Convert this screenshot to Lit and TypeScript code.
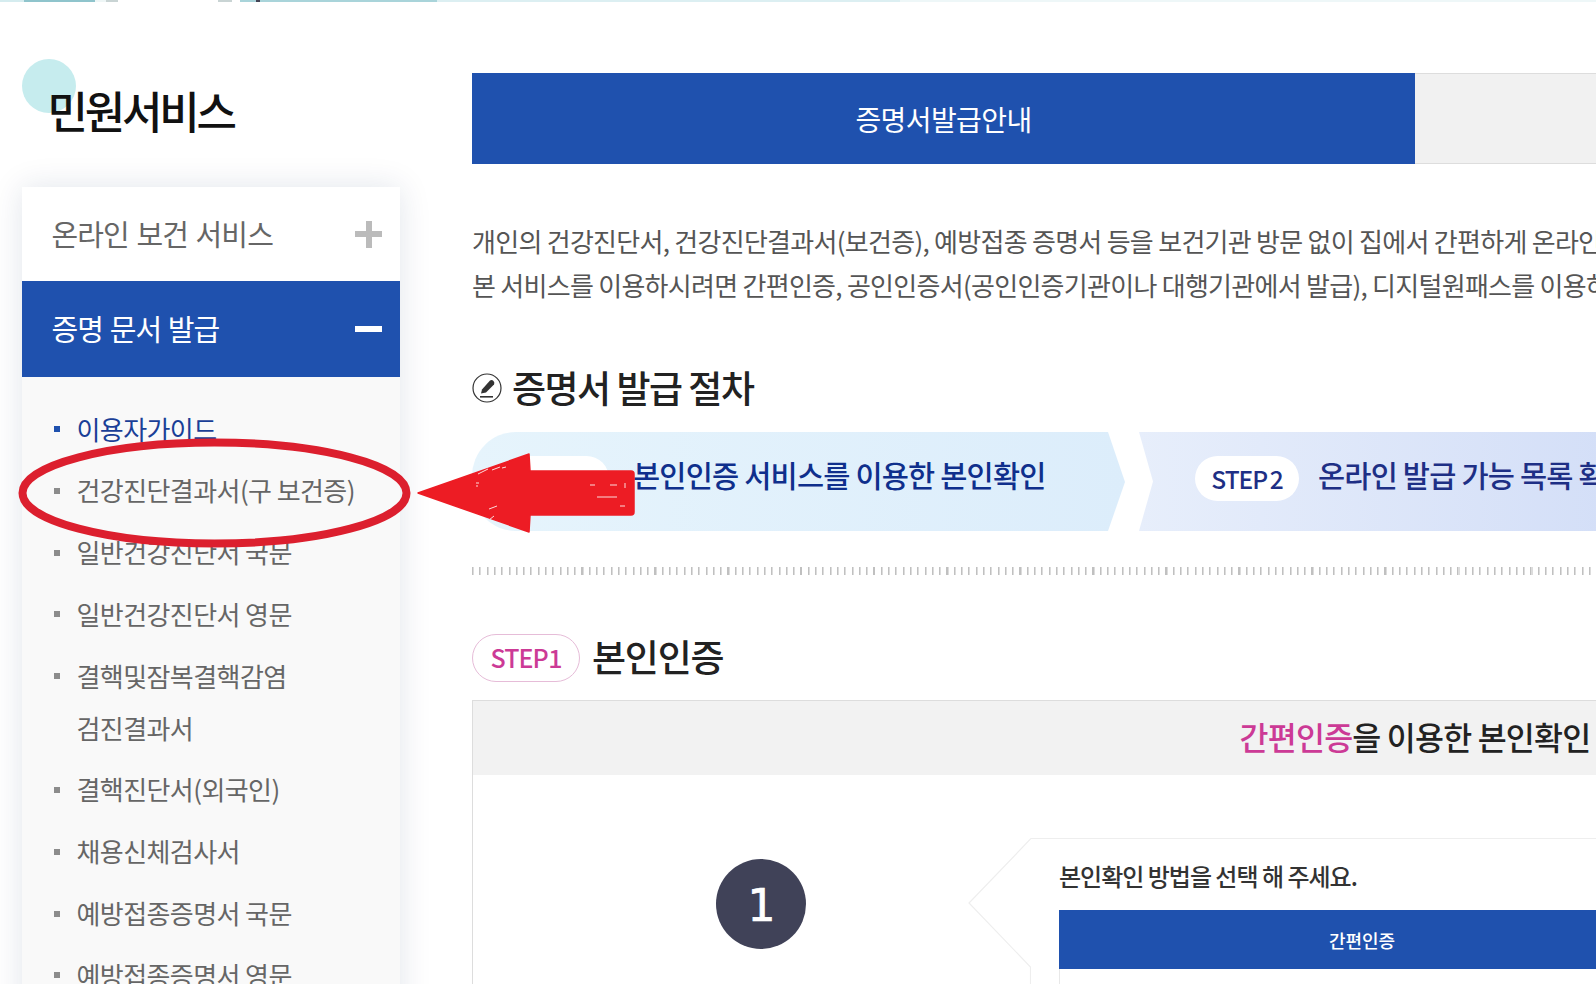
import { LitElement, html, css, svg } from "lit";
import { customElement } from "lit/decorators.js";

const SUB: { label: string[]; on?: boolean }[] = [
  { label: ["이용자가이드"], on: true },
  { label: ["건강진단결과서(구 보건증)"] },
  { label: ["일반건강진단서 국문"] },
  { label: ["일반건강진단서 영문"] },
  { label: ["결핵및잠복결핵감염", "검진결과서"] },
  { label: ["결핵진단서(외국인)"] },
  { label: ["채용신체검사서"] },
  { label: ["예방접종증명서 국문"] },
  { label: ["예방접종증명서 영문"] },
];

@customElement("app-root")
export class AppRoot extends LitElement {
  static styles = css`
    :host { display: block; width: 1596px; height: 984px; overflow: hidden; position: relative; background: #fff;
      font-family: "Noto Sans CJK KR", "Noto Sans", sans-serif; color: #555; }
    .strip { height: 2px; background: linear-gradient(90deg,
      #d5ecef 0 24px, #8fc4cc 24px 95px, #eef6f6 95px 106px, #c9d4d4 106px 118px, #fff 118px 218px, #c9d4d4 218px 232px,
      #fff 232px 240px, #a9d4da 240px 256px, #445 256px 260px, #a9d4da 260px 437px, #dceff2 437px 900px, #eef7f8 900px); }
    .row { display: flex; align-items: flex-start; }
    .side { flex: 0 0 378px; margin-left: 22px; }
    .title { position: relative; height: 185px; }
    .title::before { content: ""; position: absolute; left: 0; top: 57px; width: 54px; height: 54px; border-radius: 50%; background: #c6ecee; }
    .title h1 { position: relative; margin: 0; padding: 82px 0 0 25.5px; font-size: 44px; line-height: 52px; font-weight: 500;
      letter-spacing: -3.2px; color: #111; }
    .card { box-shadow: 0 0 30px rgba(20, 40, 90, 0.12); background: #f9f9f9; padding-bottom: 60px; }
    .head { display: flex; align-items: center; justify-content: space-between; height: 94px; padding: 0 18px 0 29.5px;
      background: #fff; font-size: 29px; letter-spacing: -0.9px; word-spacing: 2px; color: #666; }
    .head.open { height: 96px; background: #1f51ae; color: #fff; word-spacing: 1px; }
    .head span:first-child { padding-bottom: 2px; }
    .sign { position: relative; width: 27px; height: 27px; color: #bbb; }
    .sign::before { content: ""; position: absolute; left: 0; right: 0; top: 10.5px; height: 6px; background: currentColor; }
    .sign.plus::after { content: ""; position: absolute; top: 0; bottom: 0; left: 10.5px; width: 6px; background: currentColor; }
    .head.open .sign { color: #fff; }
    ul { list-style: none; margin: 0; padding: 25.5px 30px 0 54.5px; font-size: 26px; letter-spacing: -0.58px; line-height: 52px; color: #666; }
    li { position: relative; margin-bottom: 9.8px; }
    li::before { content: ""; position: absolute; left: -22.5px; top: 23.5px; width: 6px; height: 6px; background: #8c8c8c; }
    li.on { color: #1a3f97; }
    li.on::before { background: #1f51ae; }
    .main { flex: 0 0 1886px; margin-left: 72px; padding-top: 71px; }
    .tabs { display: flex; height: 91px; font-size: 28px; letter-spacing: -0.6px; }
    .tab { flex: 1; display: flex; align-items: center; justify-content: center; box-sizing: border-box; background: #f1f1f1;
      border-top: 1px solid #ddd; border-bottom: 1px solid #ddd; }
    .tab.on { background: #1f51ae; color: #fff; border: 0; }
    .intro { margin: 55px 0 0; font-size: 26px; letter-spacing: -0.72px; line-height: 43.5px; white-space: nowrap; color: #555; }
    .h2 { display: flex; align-items: center; gap: 10px; height: 44px; margin: 60px 0 0; font-size: 37px; letter-spacing: -1.5px; line-height: 44px; font-weight: 500; color: #222; }
    .h2 svg { display: block; }
    .h2 span { padding-bottom: 2px; }
    .steps { display: flex; margin-top: 22px; height: 99px; font-size: 29.5px; letter-spacing: -0.8px; font-weight: 500; }
    .step { display: flex; align-items: flex-start; flex-shrink: 0; white-space: nowrap; }
    .step.a { width: 653px; padding-left: 33px; box-sizing: border-box; color: #0f2f8c;
      background: linear-gradient(90deg, #e6f4fc, #dcedfb);
      clip-path: path("M44 0 H636 L653 50 L636 99 H44 A44 44 0 0 1 0 55 V44 A44 44 0 0 1 44 0 Z"); }
    .step.b { width: 800px; margin-left: 14px; padding-left: 56px; box-sizing: border-box; color: #1e2f85;
      background: linear-gradient(90deg, #e7eefb, #c6d4f5);
      clip-path: polygon(0 0, 100% 0, 100% 100%, 0 100%, 14px 50%); }
    .step-text { margin-top: 19px; line-height: 46px; }
    .pill { flex: none; width: 104px; height: 45px; margin-top: 24px; box-sizing: border-box; padding-bottom: 1px; border-radius: 23px; background: #fff;
      display: flex; align-items: center; justify-content: center; font-size: 24.5px; letter-spacing: -1px; word-spacing: -2px; }
    .a .pill { margin-right: 24px; }
    .b .pill { margin-right: 19px; }
    .dash { margin-top: 36px; height: 8px; background: repeating-linear-gradient(90deg, #c0c0c0 0 1px, #dcdcdc 1px 2px, transparent 2px 7.3px); }
    .h3 { display: flex; align-items: center; gap: 12px; margin-top: 59px; height: 48px; font-size: 37px; letter-spacing: -1.2px; font-weight: 500; color: #222; }
    .h3 > span:last-child { padding-bottom: 4px; }
    .tag { width: 108px; height: 48px; box-sizing: border-box; padding-bottom: 3px; border: 1px solid #e6bcd8; border-radius: 24px; display: flex; align-items: center; justify-content: center;
      font-size: 25px; font-weight: 500; color: #cc3a96; letter-spacing: -1px; word-spacing: -4px; }
    .box { margin-top: 18px; border: 1px solid #ddd; border-bottom: 0; }
    .box-head { height: 74px; box-sizing: border-box; padding-bottom: 4px; background: #f2f2f2; display: flex; align-items: center; justify-content: center;
      font-size: 31.5px; letter-spacing: -0.8px; font-weight: 500; color: #222; }
    .box-head b { font-weight: 500; color: #cc3a96; }
    .box-body { display: flex; align-items: flex-start; padding-top: 63px; }
    .num { flex: none; width: 90px; height: 90px; margin: 21px 162px 0 243px; border-radius: 50%; background: #404258; color: #fff;
      display: flex; align-items: center; justify-content: center; padding: 3px 0 0 1px; box-sizing: border-box; font-size: 44px; font-family: "DejaVu Sans", sans-serif; -webkit-text-stroke: 0.7px #fff; }
    .tip { flex: none; display: block; }
    .bubble { flex: 1; border-top: 1px solid #eee; padding: 20px 0 0 28px; }
    .bubble p { margin: 0; font-size: 24px; line-height: 34px; font-weight: 500; color: #333; letter-spacing: -1px; }
    .bar { margin-top: 17px; width: 606px; height: 59px; background: #1f51ae; color: #fff; display: flex; align-items: center; justify-content: center; font-size: 18px; font-weight: 500; }
    .table { width: 606px; height: 40px; box-sizing: border-box; border-left: 1px solid #e8e8e8; }
    .mark { position: absolute; left: 0; top: 0; pointer-events: none; }
  `;

  private pencil() {
    return html`<svg width="30" height="30" viewBox="0 0 30 30">
      <circle cx="15" cy="15" r="14" fill="#fff" stroke="#333" stroke-width="1.2"></circle>
      <path d="M10 16.500 L18 7.500 Q20 6.500 21.500 8 Q23 9.500 22 11.500 L14 19.500 L9 20.500 Z" fill="#333"></path>
      <rect x="8" y="23" width="13" height="1.600" fill="#333"></rect>
    </svg>`;
  }

  private annotation() {
    const specks = [
      "M476 483h3", "M476 486h2", "M478 474l10-5", "M492 470l8-3", "M502 468l4-1", "M489 509l8-3", "M494 516l-5 4",
      "M590 485h5", "M610 485h7", "M597 497h20", "M620 506h5", "M625 483v5",
    ];
    return svg`<svg class="mark" width="1596" height="984" viewBox="0 0 1596 984">
      <ellipse cx="214.500" cy="493" rx="192" ry="50.500" fill="none" stroke="#dc1f2e" stroke-width="8"></ellipse>
      <path d="M418 493 L529 454 L530 471 H631 Q634 471 634 474 V512 Q634 515 631 515 H530 L529 532 Z" fill="#ed1c24" stroke="#ed1c24" stroke-width="1.500" stroke-linejoin="round"></path>
      ${specks.map((d) => svg`<path d=${d} stroke="#fbdcdc" stroke-width="1" fill="none"></path>`)}
    </svg>`;
  }

  render() {
    return html`
      <div class="strip"></div>
      <div class="row">
        <aside class="side">
          <div class="title"><h1>민원서비스</h1></div>
          <div class="card">
            <div class="head"><span>온라인 보건 서비스</span><span class="sign plus"></span></div>
            <div class="head open"><span>증명 문서 발급</span><span class="sign"></span></div>
            <ul>${SUB.map((s) => html`<li class=${s.on ? "on" : ""}>${s.label.map((t, i) => html`${i ? html`<br />` : ""}${t}`)}</li>`)}</ul>
          </div>
        </aside>
        <main class="main">
          <div class="tabs"><div class="tab on">증명서발급안내</div><div class="tab"></div></div>
          <p class="intro">개인의 건강진단서, 건강진단결과서(보건증), 예방접종 증명서 등을 보건기관 방문 없이 집에서 간편하게 온라인으로 발급받을 수 있습니다.<br />본 서비스를 이용하시려면 간편인증, 공인인증서(공인인증기관이나 대행기관에서 발급), 디지털원패스를 이용하여 본인확인이 필요합니다.</p>
          <div class="h2">${this.pencil()}<span>증명서 발급 절차</span></div>
          <div class="steps">
            <div class="step a"><span class="pill">STEP 1</span><span class="step-text">본인인증 서비스를 이용한 본인확인</span></div>
            <div class="step b"><span class="pill">STEP 2</span><span class="step-text">온라인 발급 가능 목록 확인</span></div>
          </div>
          <div class="dash"></div>
          <div class="h3"><span class="tag">STEP 1</span><span>본인인증</span></div>
          <div class="box">
            <div class="box-head"><span><b>간편인증</b>을 이용한 본인확인</span></div>
            <div class="box-body">
              <div class="num">1</div>
              <svg class="tip" width="63" height="150" viewBox="0 0 63 150"><path d="M63 0.500 L1 65 L62.500 129 V150" fill="none" stroke="#eee" stroke-width="1.200"></path></svg>
              <div class="bubble">
                <p>본인확인 방법을 선택 해 주세요.</p>
                <div class="bar">간편인증</div>
                <div class="table"></div>
              </div>
            </div>
          </div>
        </main>
      </div>
      ${this.annotation()}
    `;
  }
}
